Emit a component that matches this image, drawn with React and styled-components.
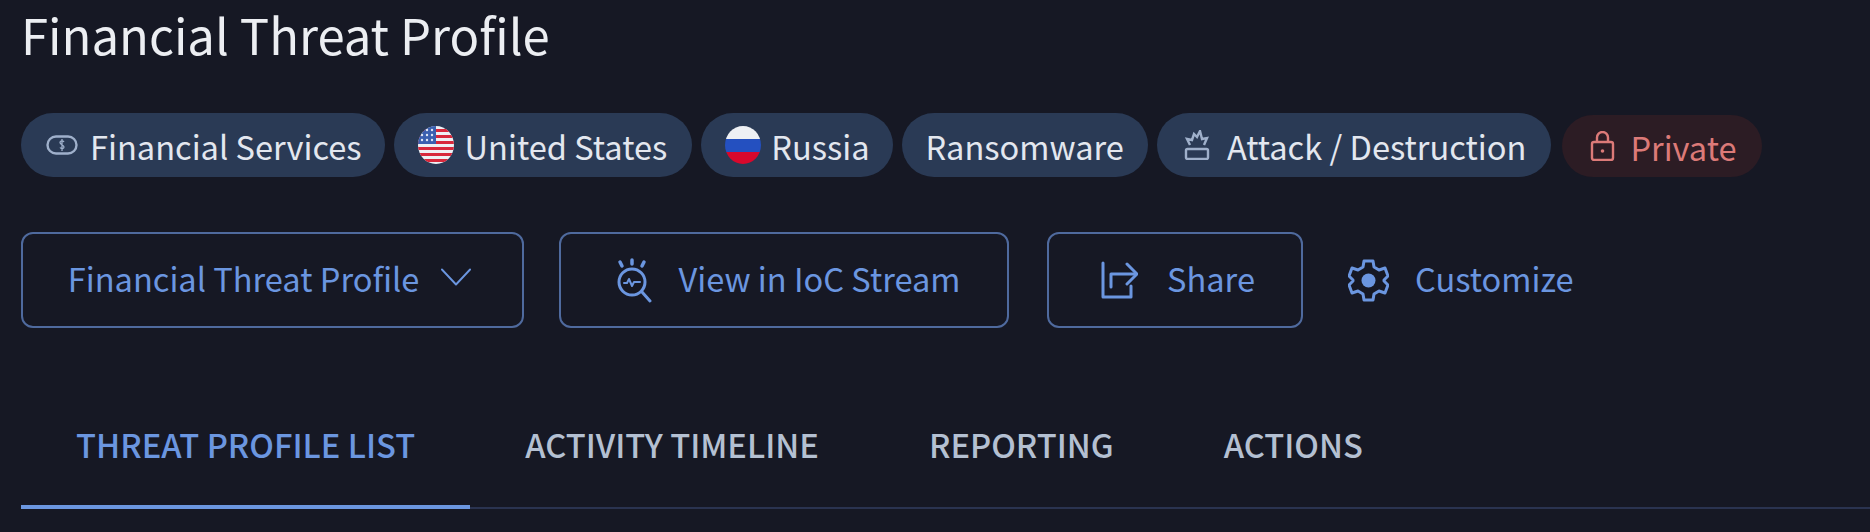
import React from "react";
import styled, { createGlobalStyle } from "styled-components";

const GlobalStyle = createGlobalStyle`
  html, body {
    margin: 0;
    padding: 0;
    background: #161824;
  }
`;

const Page = styled.div`
  width: 1870px;
  height: 532px;
  overflow: hidden;
  background: #161824;
  font-family: "Noto Sans CJK SC", "Noto Sans", sans-serif;
  display: flex;
  flex-direction: column;
`;

const Title = styled.h1`
  margin: 0;
  padding-left: 21px;
  height: 113px;
  box-sizing: border-box;
  font-size: 49px;
  line-height: 68px;
  font-weight: 400;
  color: #eceef2;
`;

const ChipRow = styled.div`
  display: flex;
  align-items: center;
  gap: 9px;
  padding-left: 21px;
  height: 64px;
`;

const Chip = styled.div`
  display: flex;
  align-items: center;
  gap: ${(props) => props.$gap || 12}px;
  height: ${(props) => (props.$danger ? 62 : 64)}px;
  margin-top: ${(props) => (props.$danger ? 2 : 0)}px;
  margin-left: ${(props) => (props.$danger ? 2 : 0)}px;
  padding: 0 ${(props) => props.$right || 24}px 0 ${(props) => props.$left || 24}px;
  border-radius: 32px;
  font-size: 32.6px;
  white-space: nowrap;
  background: ${(props) => (props.$danger ? "#2c1c24" : "#2a3a55")};
  color: ${(props) => (props.$danger ? "#dc7a78" : "#e3e7ef")};
`;

const ButtonRow = styled.div`
  display: flex;
  align-items: center;
  gap: 35px;
  padding-left: 21px;
  margin-top: 55px;
`;

const OutlineButton = styled.button`
  display: flex;
  align-items: center;
  justify-content: center;
  gap: ${(props) => props.$gap}px;
  width: ${(props) => props.$width}px;
  height: 96px;
  margin-left: ${(props) => props.$offset || 0}px;
  padding: 0 ${(props) => props.$right || 0}px 0 ${(props) => props.$left || 0}px;
  background: transparent;
  border: 2px solid #4f6a9e;
  border-radius: 12px;
  color: #6b96e0;
  font-family: inherit;
  font-size: 32.6px;
  white-space: nowrap;
`;

const TextButton = styled(OutlineButton)`
  width: auto;
  border: none;
`;

const Label = styled.span`
  margin-top: -5px;
`;

const Tabs = styled.div`
  display: flex;
  margin: 79px 0 0 21px;
  height: 102px;
  box-sizing: border-box;
  border-bottom: 2px solid #2a3350;
`;

const Tab = styled.div`
  padding: 14px 55px 0;
  margin-bottom: -2px;
  font-size: 32.7px;
  line-height: 46px;
  font-weight: 500;
  white-space: nowrap;
  color: ${(props) => (props.$active ? "#6b96e0" : "#b4c0d2")};
  border-bottom: 4px solid ${(props) => (props.$active ? "#6b96e0" : "transparent")};
`;

const ChipIcon = styled.svg`
  display: block;
  flex: none;
  fill: none;
  stroke: ${(props) => props.$color || "#9fb0cb"};
  stroke-width: 2.4;
`;

const MoneyIcon = () => (
  <ChipIcon width="32" height="20" viewBox="0 0 32 20">
    <rect x="1.500" y="1.500" width="29" height="17" rx="8.500" />
    <path d="M18 7c-1-1.500-4-1.500-4 .5S18 10 18 12s-3 2-4 .5M16 4v12" strokeWidth="1.300" />
  </ChipIcon>
);

const UsFlag = () => (
  <svg width="36" height="38" viewBox="0 0 36 38" style={{ flex: "none" }}>
    <clipPath id="us">
      <ellipse cx="18" cy="19" rx="18" ry="19" />
    </clipPath>
    <g clipPath="url(#us)">
      <rect width="36" height="38" fill="#eef0f4" />
      {[0, 6, 12, 18, 24, 30].map((y) => (
        <rect key={y} y={y + 3} width="36" height="3" fill="#d8283c" />
      ))}
      <rect width="18" height="18" fill="#3b5fb0" />
      {[4, 9, 14].map((y) =>
        [4, 9, 14].map((x) => <circle key={`${x}-${y}`} cx={x} cy={y} r="1.200" fill="#dfe6f5" />)
      )}
    </g>
  </svg>
);

const RuFlag = () => (
  <svg width="36" height="38" viewBox="0 0 36 38" style={{ flex: "none" }}>
    <clipPath id="ru">
      <ellipse cx="18" cy="19" rx="18" ry="19" />
    </clipPath>
    <g clipPath="url(#ru)">
      <rect width="36" height="13" fill="#eef0f4" />
      <rect y="13" width="36" height="13" fill="#2450c0" />
      <rect y="26" width="36" height="12" fill="#d8082c" />
    </g>
  </svg>
);

const AttackIcon = () => (
  <ChipIcon width="26" height="30" viewBox="0 0 26 30">
    <rect x="2" y="19" width="22" height="10" rx="1.500" />
    <path d="M6 15 3 9l5 1 2-6 3 3 3-6 2 8 5-1-3 7" />
  </ChipIcon>
);

const LockIcon = () => (
  <ChipIcon width="25" height="30" viewBox="0 0 25 30" $color="#dc7a78">
    <rect x="2" y="11" width="21" height="18" rx="2" />
    <path d="M7 11V6.500a5.500 5.500 0 0 1 11 0V11" />
    <circle cx="12.500" cy="20" r="1.800" fill="#dc7a78" stroke="none" />
  </ChipIcon>
);

const BlueIcon = styled.svg`
  display: block;
  flex: none;
  fill: none;
  stroke: #6b96e0;
  stroke-width: 3;
  stroke-linecap: round;
  stroke-linejoin: round;
`;

const Chevron = () => (
  <BlueIcon width="30" height="18" viewBox="0 0 32 18" style={{ strokeWidth: 2, marginTop: -6 }}>
    <path d="M1 1 16 17 31 1" />
  </BlueIcon>
);

const StreamIcon = () => (
  <BlueIcon width="36" height="45" viewBox="0 0 36 45">
    <path d="M16 2v4M4 4l2 4M28 4l-2 4" strokeWidth="3.500" />
    <circle cx="16" cy="24" r="13" />
    <path d="M8 25h3l2-4 3 7 2-4h6" strokeWidth="2" />
    <path d="m26 34 8 9" />
  </BlueIcon>
);

const ShareIcon = () => (
  <BlueIcon width="37" height="38" viewBox="0 0 37 38">
    <path d="M2 2v34h28V25" />
    <path d="M10 26V13h25" />
    <path d="m26 3 10 10-10 10" />
  </BlueIcon>
);

const GearIcon = () => (
  <BlueIcon width="41" height="43" viewBox="0 0 41 43">
    <path d="M16 2h9l1 6 5 3 6-2 3 8-4 4v1l4 4-3 8-6-2-5 3-1 6h-9l-1-6-5-3-6 2-3-8 4-4v-1l-4-4 3-8 6 2 5-3z" />
    <circle cx="20.500" cy="21.500" r="7" fill="#6b96e0" stroke="none" />
  </BlueIcon>
);

const App = () => (
  <Page>
    <GlobalStyle />
    <Title>Financial Threat Profile</Title>
    <ChipRow>
      <Chip $left={25} $right={23}>
        <MoneyIcon />
        Financial Services
      </Chip>
      <Chip $gap={11} $right={25}>
        <UsFlag />
        United States
      </Chip>
      <Chip $gap={10} $right={23}>
        <RuFlag />
        Russia
      </Chip>
      <Chip>Ransomware</Chip>
      <Chip $left={27} $gap={17} $right={25}>
        <AttackIcon />
        Attack / Destruction
      </Chip>
      <Chip $danger $left={28} $right={25} $gap={15}>
        <LockIcon />
        Private
      </Chip>
    </ChipRow>
    <ButtonRow>
      <OutlineButton $width={503} $gap={22} $right={6}>
        <Label>Financial Threat Profile</Label>
        <Chevron />
      </OutlineButton>
      <OutlineButton $width={450} $gap={27} $left={8}>
        <StreamIcon />
        <Label>View in IoC Stream</Label>
      </OutlineButton>
      <OutlineButton $width={256} $gap={29} $left={6} $offset={3}>
        <ShareIcon />
        <Label>Share</Label>
      </OutlineButton>
      <TextButton $gap={26} $offset={10}>
        <GearIcon />
        <Label>Customize</Label>
      </TextButton>
    </ButtonRow>
    <Tabs>
      <Tab $active>THREAT PROFILE LIST</Tab>
      <Tab>ACTIVITY TIMELINE</Tab>
      <Tab>REPORTING</Tab>
      <Tab>ACTIONS</Tab>
    </Tabs>
  </Page>
);

export default App;
